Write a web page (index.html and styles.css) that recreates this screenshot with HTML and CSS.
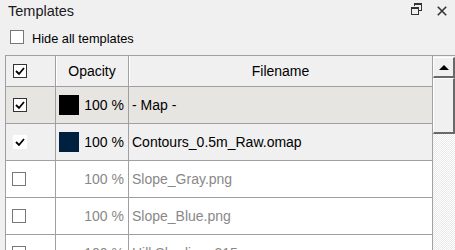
FILE: index.html
```html
<!DOCTYPE html>
<html lang="en">
<head>
  <meta charset="UTF-8" />
  <title>Templates</title>
  <link rel="stylesheet" href="styles.css">
</head>
<body>
  <div class="dock">
    <div class="dock-title">
      <span class="title-text">Templates</span>
      <span class="title-btns">
        <!-- float button -->
        <svg class="btn-float" width="11" height="12" viewBox="0 0 11 12">
          <path d="M3 0h8v8h-3v-1h2v-5h-6v1h-1z" fill="#333"/>
          <path d="M0 4h8v8h-8z M1 6h6v5h-6z" fill="#333" fill-rule="evenodd"/>
        </svg>
        <!-- close button -->
        <svg class="btn-close" width="10" height="10" viewBox="0 0 10 10">
          <path d="M0.8 0.8L9.2 9.2M9.2 0.8L0.8 9.2" stroke="#333" stroke-width="1.6"/>
        </svg>
      </span>
    </div>

    <label class="hide-row">
      <span class="cb cb-empty"></span>
      <span class="hide-label">Hide all templates</span>
    </label>

    <div class="table-frame">
      <div class="grid">
        <div class="row row-head">
          <div class="cell cell-check"><span class="cb cb-dark"><svg width="12" height="12" viewBox="0 0 12 12"><polyline points="2,6 5,9 10,3" fill="none" stroke="#000" stroke-width="1.8"/></svg></span></div>
          <div class="cell cell-head">Opacity</div>
          <div class="cell cell-head">Filename</div>
        </div>

        <div class="row row-map">
          <div class="cell cell-check"><span class="cb cb-dark"><svg width="12" height="12" viewBox="0 0 12 12"><polyline points="2,6 5,9 10,3" fill="none" stroke="#000" stroke-width="1.8"/></svg></span></div>
          <div class="cell cell-opacity"><span class="swatch swatch-black"></span><span class="pct">100 %</span></div>
          <div class="cell cell-name">- Map -</div>
        </div>

        <div class="row row-on">
          <div class="cell cell-check"><span class="cb cb-plain"><svg width="12" height="12" viewBox="0 0 12 12"><polyline points="2,6 5,9 10,3" fill="none" stroke="#000" stroke-width="1.8"/></svg></span></div>
          <div class="cell cell-opacity"><span class="swatch swatch-navy"></span><span class="pct">100 %</span></div>
          <div class="cell cell-name">Contours_0.5m_Raw.omap</div>
        </div>

        <div class="row row-off">
          <div class="cell cell-check"><span class="cb cb-empty"></span></div>
          <div class="cell cell-opacity"><span class="pct">100 %</span></div>
          <div class="cell cell-name">Slope_Gray.png</div>
        </div>

        <div class="row row-off">
          <div class="cell cell-check"><span class="cb cb-empty"></span></div>
          <div class="cell cell-opacity"><span class="pct">100 %</span></div>
          <div class="cell cell-name">Slope_Blue.png</div>
        </div>

        <div class="row row-off">
          <div class="cell cell-check"><span class="cb cb-empty"></span></div>
          <div class="cell cell-opacity"><span class="pct">100 %</span></div>
          <div class="cell cell-name">Hill Shading_315.png</div>
        </div>
      </div>

      <div class="scrollbar">
        <div class="sb-btn"><span class="sb-arrow"></span></div>
        <div class="sb-thumb"></div>
        <div class="sb-track"></div>
      </div>
    </div>
  </div>
</body>
</html>
```

FILE: styles.css
```css
/* dock panel */
body {
  margin: 0;
  background-color: #f0f0f0;
  font-family: "Liberation Sans", Arial, sans-serif;
  color: #000;
  overflow: hidden;
}

.dock {
  width: 455px;
  height: 250px;
}

/* title bar */
.dock-title {
  display: flex;
  align-items: center;
  height: 22px;
  padding: 0 8px;
}

.title-text {
  font-size: 14.5px;
  line-height: 22px;
  color: #1a1a1a;
}

.title-btns {
  margin-left: auto;
  display: flex;
  align-items: center;
  gap: 15px;
  height: 22px;
  padding-bottom: 4px;
  box-sizing: border-box;
}

.btn-close {
  margin-top: 3px;
}

/* hide all templates */
.hide-row {
  display: flex;
  align-items: center;
  height: 29px;
  padding-left: 10px;
  gap: 8px;
}

.hide-label {
  font-size: 12.8px;
  padding-top: 3px;
}

/* checkboxes */
.cb {
  display: flex;
  align-items: center;
  justify-content: center;
  width: 14px;
  height: 14px;
  box-sizing: border-box;
  background-color: #fff;
  border: 1px solid #777;
}

.cb-dark {
  border-color: #333;
}

.cb-plain {
  border-color: #fff;
}

/* table */
.table-frame {
  display: flex;
  margin-top: 4px;
  margin-left: 5px;
  border-top: 1px solid #a0a0a0;
}

.grid {
  width: 427px;
  border-left: 1px solid #a0a0a0;
  border-right: 1px solid #a0a0a0;
}

.row {
  display: grid;
  grid-template-columns: 50px 73px 1fr;
  height: 37px;
  box-sizing: border-box;
  border-bottom: 1px solid #a0a0a0;
  font-size: 14px;
}

.cell {
  display: flex;
  align-items: center;
  border-right: 1px solid #a0a0a0;
  white-space: nowrap;
  overflow: hidden;
}

.cell:last-child {
  border-right: none;
}

.cell-check {
  padding-left: 7px;
}

.row-head {
  height: 31px;
  background-color: #f0f0f0;
}

.cell-head {
  justify-content: center;
  box-shadow: inset 1px 0 #fff;
}

.row-map {
  background-color: #e7e5e1;
}

.row-on {
  background-color: #f0f0f0;
}

.row-off {
  background-color: #fff;
  color: #888;
}

.row-off .cell-check {
  padding-left: 6px;
}

.cell-opacity {
  padding: 0 4px 0 3px;
}

.pct {
  margin-left: auto;
}

.swatch {
  width: 20px;
  height: 20px;
}

.swatch-black {
  background-color: #000;
}

.swatch-navy {
  background-color: #002040;
}

.cell-name {
  padding-left: 3px;
}

/* scrollbar */
.scrollbar {
  display: flex;
  flex-direction: column;
  width: 22px;
  height: 195px;
  padding-top: 1px;
}

.sb-btn,
.sb-thumb {
  box-sizing: border-box;
  background-color: #f0f0f0;
  border-top: 1px solid #fff;
  border-left: 1px solid #fff;
  border-right: 2px solid #696969;
  border-bottom: 2px solid #696969;
}

.sb-btn {
  display: flex;
  align-items: center;
  justify-content: center;
  height: 21px;
}

.sb-arrow {
  width: 0;
  height: 0;
  border-left: 5px solid transparent;
  border-right: 5px solid transparent;
  border-bottom: 5px solid #000;
}

.sb-thumb {
  height: 56px;
}

.sb-track {
  flex: 1;
  background-color: #fff;
  background-image: conic-gradient(#fff 25%, #e9e9e9 0 50%, #fff 0 75%, #e9e9e9 0);
  background-size: 2px 2px;
}
```
